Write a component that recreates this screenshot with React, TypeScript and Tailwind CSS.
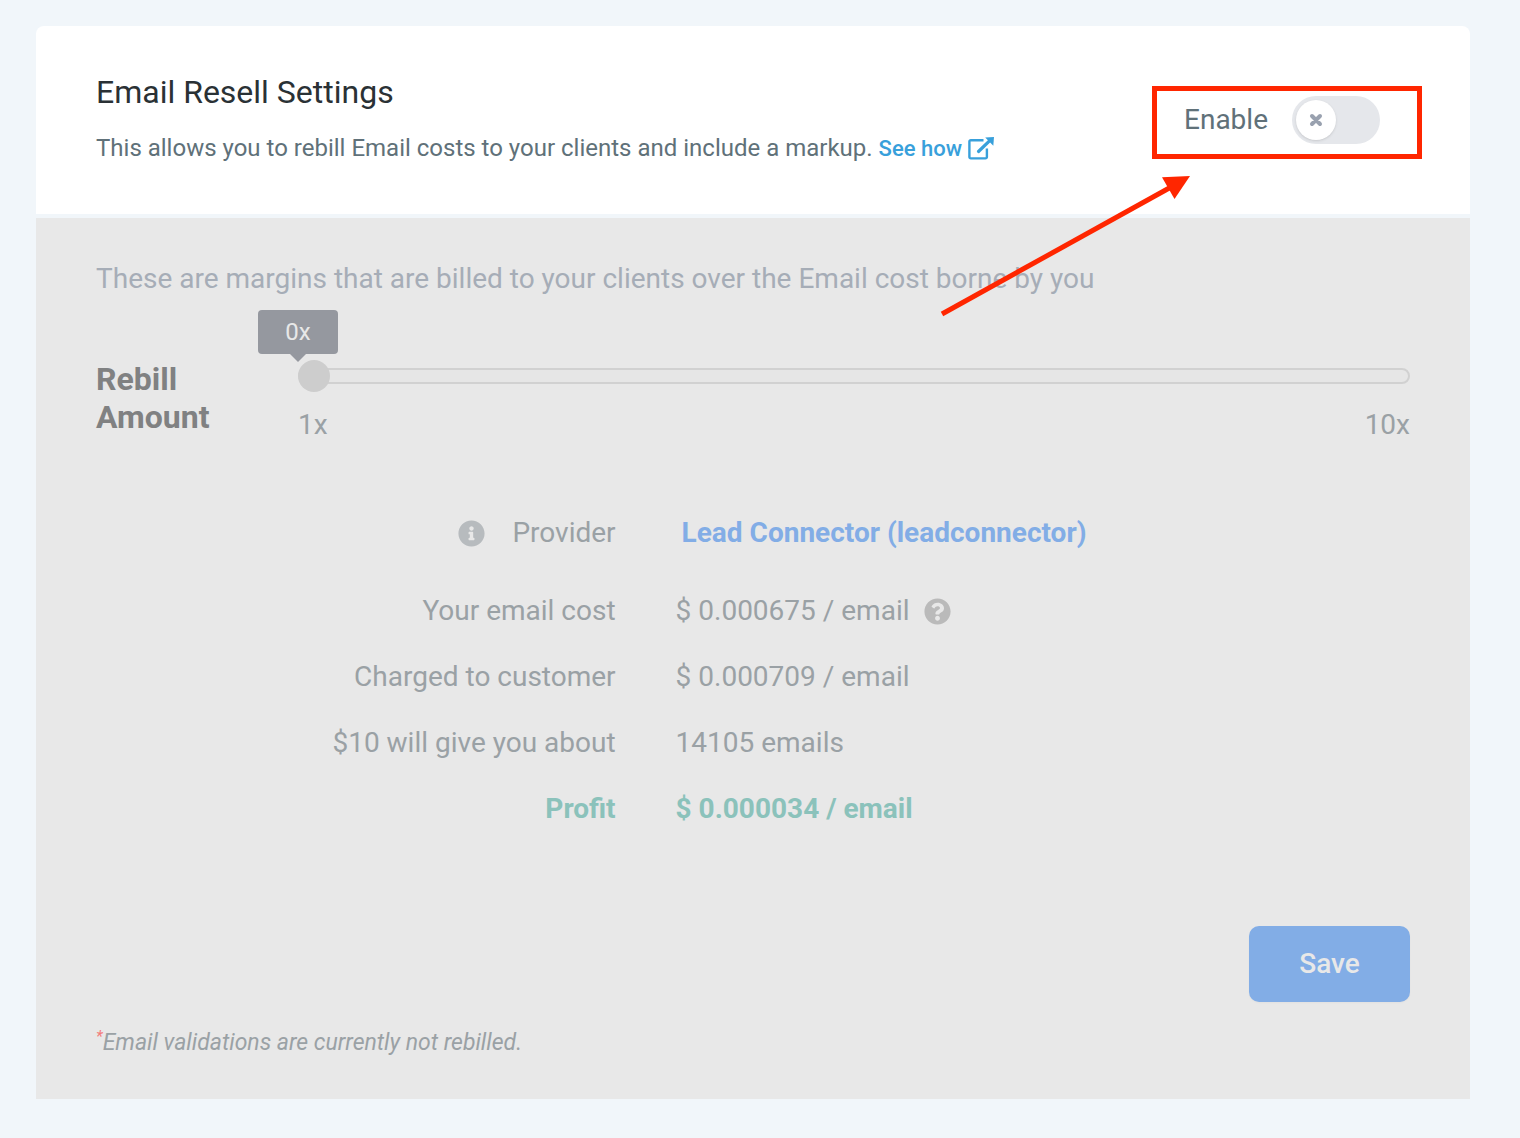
import React, { useState } from 'react';
import { FaInfoCircle, FaQuestionCircle } from 'react-icons/fa';

interface CostRow {
  label: string;
  value: string;
  hasHelp?: boolean;
  isProfit?: boolean;
}

const costRows: CostRow[] = [
  { label: 'Your email cost', value: '$ 0.000675 / email', hasHelp: true },
  { label: 'Charged to customer', value: '$ 0.000709 / email' },
  { label: '$10 will give you about', value: '14105 emails' },
  { label: 'Profit', value: '$ 0.000034 / email', isProfit: true },
];

function ExternalLinkIcon() {
  return (
    <svg className="w-[26px] h-6" viewBox="0 0 26 24" fill="none" aria-hidden="true">
      <path
        d="M15.5 3.2H2.8a1.4 1.4 0 0 0-1.4 1.4v15.4a1.4 1.4 0 0 0 1.4 1.4h14.7a1.4 1.4 0 0 0 1.4-1.4V11.500"
        stroke="currentColor"
        strokeWidth="2.4"
      />
      <path d="M10.5 14.5L21.5 3.8" stroke="currentColor" strokeWidth="3.2" strokeLinecap="round" />
      <path d="M17.200 .6L26 0l-.7 8.800z" fill="currentColor" />
    </svg>
  );
}

function EnableToggle() {
  const [enabled, setEnabled] = useState(false);

  return (
    <div className="relative flex items-center mr-[30px]">
      <label htmlFor="enable" className="text-[28px] leading-10 text-[#607179] mr-6">
        Enable
      </label>
      <div className="relative flex">
        <input
          id="enable"
          type="checkbox"
          role="switch"
          checked={enabled}
          onChange={(e) => setEnabled(e.target.checked)}
          className="peer appearance-none w-[88px] h-12 rounded-full bg-gray-200 checked:bg-blue-600 cursor-pointer"
        />
        <span className="absolute left-1 top-1 w-10 h-10 rounded-full bg-white shadow flex items-center justify-center pointer-events-none peer-checked:left-11">
          <svg className="w-6 h-6 text-gray-400" fill="none" viewBox="0 0 12 12" aria-hidden="true">
            <path
              d="M4 8l2-2m0 0l2-2M6 6L4 4m2 2l2 2"
              stroke="currentColor"
              strokeWidth="2"
              strokeLinecap="round"
              strokeLinejoin="round"
            />
          </svg>
        </span>
      </div>

      {/* Callout frame and arrow */}
      <span className="absolute -top-[10px] -bottom-[15px] -left-8 -right-[42px] border-5 border-[#ff2600] pointer-events-none" />
      <svg
        className="absolute top-[78px] -left-[244px] w-[250px] h-36 z-10 pointer-events-none"
        viewBox="0 0 250 144"
        aria-hidden="true"
      >
        <path d="M2 140L232 12.5" stroke="#ff2600" strokeWidth="5" />
        <path d="M222 3.3L250 2L234.5 25z" fill="#ff2600" />
      </svg>
    </div>
  );
}

function RebillSlider() {
  const [amount, setAmount] = useState(1);

  return (
    <div className="flex items-start">
      <label htmlFor="rebill" className="w-[202px] shrink-0 pr-16 text-[32px] leading-[38px] font-bold text-[#808182]">
        Rebill Amount
      </label>
      <div className="relative flex-1 pt-2">
        <output
          htmlFor="rebill"
          className="absolute -top-[50px] left-0 -translate-x-1/2 w-20 h-11 rounded bg-[#95989f] text-[#e8e8e8] text-2xl leading-11 text-center"
        >
          {amount - 1}x
          <span className="absolute top-full left-1/2 -translate-x-1/2 border-8 border-b-0 border-transparent border-t-[#95989f]" />
        </output>
        <input
          id="rebill"
          type="range"
          min={1}
          max={10}
          value={amount}
          onChange={(e) => setAmount(Number(e.target.value))}
          className="block w-full h-4 appearance-none rounded-full bg-[#e6e6e6] border-2 border-[#d1d1d1] [&::-webkit-slider-thumb]:appearance-none [&::-webkit-slider-thumb]:w-8 [&::-webkit-slider-thumb]:h-8 [&::-webkit-slider-thumb]:-ml-[2px] [&::-webkit-slider-thumb]:rounded-full [&::-webkit-slider-thumb]:bg-[#cdcdcd]"
        />
        <div className="flex justify-between mt-[21px] text-[28px] leading-10 text-[#9aa1a5]">
          <span>1x</span>
          <span>10x</span>
        </div>
      </div>
    </div>
  );
}

export default function App() {
  return (
    <main className="min-h-screen bg-[#f1f6fa] pt-[26px] pb-9 pl-9 pr-[50px] font-['Roboto',sans-serif]">
      {/* Header */}
      <header className="bg-white rounded-t-lg px-15 pt-[46px] pb-[45px] flex justify-between items-start">
        <div>
          <h1 className="text-[32px] leading-10 text-[#2a3135]">Email Resell Settings</h1>
          <p className="mt-4 text-2xl leading-10 text-[#607179]">
            This allows you to rebill Email costs to your clients and include a markup.{' '}
            <a href="#" className="inline-flex items-center gap-1.5 text-[22px] leading-10 text-[#38a0db] font-medium">
              See how <ExternalLinkIcon />
            </a>
          </p>
        </div>
        <div className="mt-6">
          <EnableToggle />
        </div>
      </header>

      {/* Margins */}
      <section className="mt-1 bg-[#e8e8e8] px-15 pt-[41px] pb-9">
        <p className="text-[28px] leading-10 text-[#a6adb7] mb-[61px]">
          These are margins that are billed to your clients over the Email cost borne by you
        </p>
        <RebillSlider />

        <table className="mt-[68px] -mx-[30px] w-[calc(100%+60px)] table-fixed text-[28px] leading-[66px] text-[#9aa1a5]">
          <tbody>
            <tr className="leading-10">
              <th scope="row" className="w-2/5 pb-[25px] font-normal">
                <div className="flex items-center justify-end">
                  <FaInfoCircle className="w-[27px] h-[27px] mr-[27px] text-[#b7bbbe]" />
                  Provider
                </div>
              </th>
              <td className="pl-[66px] pb-[25px] font-bold text-[#82ade6]">Lead Connector (leadconnector)</td>
            </tr>
            {costRows.map((row) => (
              <tr key={row.label} className={row.isProfit ? 'text-[#8bc2bb] font-bold' : 'font-normal'}>
                <th scope="row" className={row.isProfit ? 'text-right font-bold' : 'text-right font-normal'}>
                  {row.label}
                </th>
                <td className="pl-15">
                  <div className="flex items-center">
                    {row.value}
                    {row.hasHelp && <FaQuestionCircle className="w-[27px] h-[27px] ml-3.5 text-[#bababa]" />}
                  </div>
                </td>
              </tr>
            ))}
          </tbody>
        </table>

        <div className="flex justify-end mt-[84px]">
          <button type="button" className="w-[161px] h-[76px] rounded-[10px] bg-[#82ade6] text-[#e8e8e8] text-[28px] font-medium shadow-[0_1px_2px_rgba(0,0,0,0.03)]">
            Save
          </button>
        </div>

        <p className="mt-[21px] text-[23px] leading-10 italic text-[#9aa1a5]">
          <sup className="text-base text-[#f47c7c]">*</sup>
          Email validations are currently not rebilled.
        </p>
      </section>
    </main>
  );
}
